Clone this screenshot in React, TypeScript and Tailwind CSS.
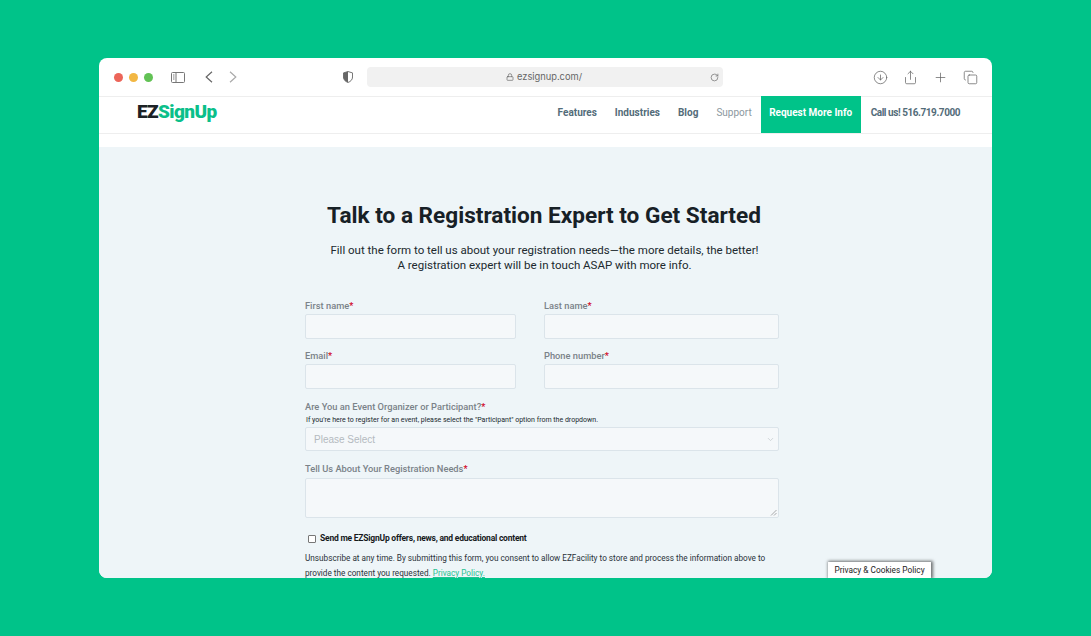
import React from 'react';
import { ChevronDown, Lock, RotateCw, Plus, Share, CircleArrowDown, Copy } from 'lucide-react';

const labelClass = 'text-[9.3px] leading-[14px] font-medium text-[#7a8288]';

function Field({ label }: { label: string }) {
  return (
    <div>
      <label className={`block h-[15px] ${labelClass}`}>
        {label}
        <span className="text-[#d0021b]">*</span>
      </label>
      <input className="block h-[25px] w-full rounded-[2px] border border-[#dbe4ea] bg-[#f5f8fa]" />
    </div>
  );
}

function Toolbar() {
  return (
    <div className="flex h-[39px] shrink-0 items-center border-b border-[#eeeeee] pl-[15px] pr-[14px]">
      <div className="flex gap-[6px]">
        <span className="h-[9px] w-[9px] rounded-full bg-[#ec6559]" />
        <span className="h-[9px] w-[9px] rounded-full bg-[#f2b743]" />
        <span className="h-[9px] w-[9px] rounded-full bg-[#62c255]" />
      </div>
      <svg className="ml-[18px]" width="14" height="11" viewBox="0 0 14 11" fill="none" stroke="#777" strokeWidth="1">
        <rect x="0.5" y="0.5" width="13" height="10" rx="1" />
        <path d="M5 .5v10M2 3h1.5M2 5h1.5M2 7h1.5" />
      </svg>
      <svg className="ml-[20px]" width="8" height="12" viewBox="0 0 8 12" fill="none" stroke="#666" strokeWidth="1.2">
        <path d="M7 .8 1.2 6 7 11.2" />
      </svg>
      <svg className="ml-[16px]" width="8" height="12" viewBox="0 0 8 12" fill="none" stroke="#aaa" strokeWidth="1.2">
        <path d="M1 .8 6.8 6 1 11.2" />
      </svg>
      <svg className="ml-[106px]" width="10" height="12" viewBox="0 0 11 13">
        <path d="M5.5.5 10.5 2v4.5c0 3-2.2 5-5 6-2.8-1-5-3-5-6V2z" fill="none" stroke="#666" />
        <path d="M5.5.5 .5 2v4.5c0 3 2.2 5 5 6z" fill="#666" />
      </svg>
      <div className="ml-[14px] flex h-[20px] w-[356px] items-center rounded-[4px] bg-[#f1f1f1] pr-[4px]">
        <div className="flex flex-1 items-center justify-center gap-[3px] pl-[11px] text-[9.3px] text-[#666] font-['Inter',sans-serif]">
          <Lock size={8} />
          ezsignup.com/
        </div>
        <RotateCw size={9} className="text-[#777]" />
      </div>
      <div className="ml-auto flex items-center gap-[15px] text-[#666]">
        <CircleArrowDown size={15} strokeWidth={1.2} />
        <Share size={15} strokeWidth={1.2} />
        <Plus size={15} strokeWidth={1.2} />
        <Copy size={15} strokeWidth={1.2} />
      </div>
    </div>
  );
}

function SiteNav() {
  return (
    <div className="flex h-[37px] shrink-0 items-stretch border-b border-[#eeeeee] pl-[38px] pr-[32px] text-[10px] font-bold text-[#536c79]">
      <div className="flex items-center pb-[7px] text-[19px] font-black leading-none tracking-[-0.6px]">
        <span className="text-[#1c2226]">EZ</span>
        <span className="text-[#0bbf8a]">SignUp</span>
      </div>
      <div className="ml-auto flex items-center gap-[18px] pb-[5px]">
        <span>Features</span>
        <span>Industries</span>
        <span>Blog</span>
        <span className="font-normal text-[#8b979e]">Support</span>
      </div>
      <div className="-mt-px ml-[9px] flex w-[100px] items-center justify-center bg-[#00c389] pb-[5px] text-white">Request More Info</div>
      <div className="ml-[10px] flex items-center pb-[5px] tracking-[-0.45px]">Call us! 516.719.7000</div>
    </div>
  );
}

export default function App() {
  return (
    <div className="h-[636px] w-[1091px] overflow-hidden bg-[#00c389] pl-[99px] pt-[58px] font-['Roboto',sans-serif]">
      <div className="relative flex h-[520px] w-[893px] flex-col overflow-hidden rounded-[8px] bg-white">
        <Toolbar />
        <SiteNav />
        <div className="mt-[13px] flex-1 bg-[#eef5f8] pl-[206px] pt-[54px]">
          <div className="w-[474px]">
            <h1 className="pl-[4px] text-center text-[22.6px] font-bold leading-[30px] text-[#172026]">
              Talk to a Registration Expert to Get Started
            </h1>
            <p className="mt-[12px] pl-[5px] text-center text-[11.5px] leading-[15px] text-[#20292e]">
              Fill out the form to tell us about your registration needs—the more details, the better!
              <br />
              A registration expert will be in touch ASAP with more info.
            </p>
            <div className="mt-[26px] grid grid-cols-[211px_235px] gap-x-[28px] gap-y-[10px]">
              <Field label="First name" />
              <Field label="Last name" />
              <Field label="Email" />
              <Field label="Phone number" />
            </div>
            <div className={`mt-[11px] ${labelClass}`}>
              Are You an Event Organizer or Participant?<span className="text-[#d0021b]">*</span>
            </div>
            <div className="ml-[1px] h-[13px] text-[7px] leading-[12px] text-[#20292e]">
              If you're here to register for an event, please select the "Participant" option from the dropdown.
            </div>
            <div className="flex h-[24px] items-center justify-between rounded-[2px] border border-[#dbe4ea] bg-[#f5f8fa] pl-[8px] pr-[3px] font-['Liberation_Sans',sans-serif] text-[10px] text-[#b4babf]">
              Please Select
              <ChevronDown size={9} className="text-[#c4cacd]" />
            </div>
            <div className={`mt-[11px] h-[16px] ${labelClass}`}>
              Tell Us About Your Registration Needs<span className="text-[#d0021b]">*</span>
            </div>
            <div className="relative h-[40px] rounded-[2px] border border-[#dbe4ea] bg-[#f5f8fa]">
              <svg className="absolute bottom-[1px] right-[1px]" width="7" height="7" viewBox="0 0 7 7" stroke="#888" strokeWidth="0.7">
                <path d="M1 6.5 6.5 1M4 6.5 6.5 4" />
              </svg>
            </div>
            <div className="mt-[15px] flex items-center pl-[3px]">
              <span className="h-[8px] w-[8px] rounded-[1px] border border-[#777] bg-white" />
              <span className="ml-[4px] text-[8.5px] leading-[11px] font-bold tracking-[-0.22px] text-[#15191c]">
                Send me EZSignUp offers, news, and educational content
              </span>
            </div>
            <p className="mt-[7px] text-[8.2px] leading-[15px] text-[#2a3238]">
              Unsubscribe at any time. By submitting this form, you consent to allow EZFacility to store and process the information above to provide the content you requested.{' '}
              <span className="text-[#1fc191] underline">Privacy Policy.</span>
            </p>
          </div>
        </div>
        <div className="absolute bottom-0 left-[729px] flex h-[16px] w-[103px] items-center justify-center bg-white text-[8.3px] text-[#222] shadow-[1px_0_3px_1px_rgba(0,0,0,0.55)]">
          Privacy &amp; Cookies Policy
        </div>
      </div>
    </div>
  );
}
